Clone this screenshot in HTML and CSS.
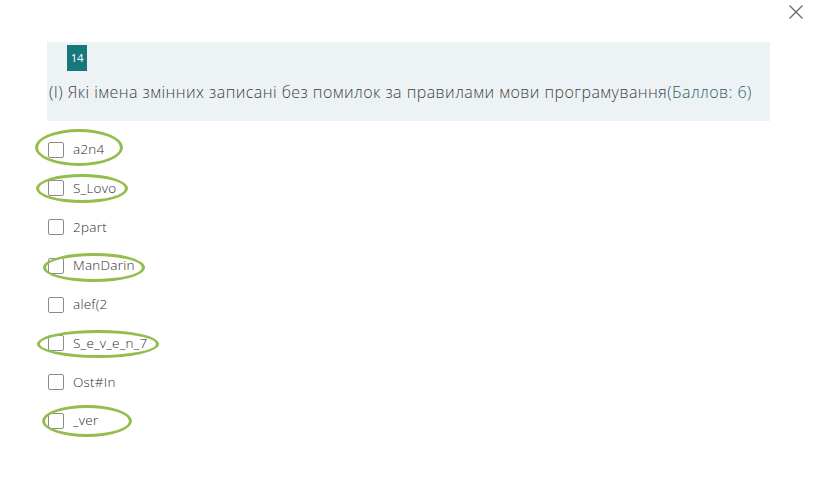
FILE: index.html
```html
<!DOCTYPE html>
<html lang="uk">
<head>
<meta charset="utf-8">
<link rel="stylesheet" href="styles.css">
</head>
<body>
<div class="page">
  <div class="close" aria-label="close">
    <svg width="16" height="16" viewBox="0 0 16 16"><path d="M1.5 1.5 L14.5 14.5 M14.5 1.5 L1.5 14.5" stroke="#6b6b6b" stroke-width="1.4" fill="none"/></svg>
  </div>
  <div class="question">
    <div class="badge">14</div>
    <div class="qtext">(І) Які імена змінних записані без помилок за правилами мови програмування<span class="points">(Баллов: 6)</span></div>
  </div>
  <ul class="options">
    <li class="option"><span class="box"></span><span class="label">a2n4</span></li>
    <li class="option"><span class="box"></span><span class="label">S_Lovo</span></li>
    <li class="option"><span class="box"></span><span class="label">2part</span></li>
    <li class="option"><span class="box"></span><span class="label">ManDarin</span></li>
    <li class="option"><span class="box"></span><span class="label">alef(2</span></li>
    <li class="option"><span class="box"></span><span class="label">S_e_v_e_n_7</span></li>
    <li class="option"><span class="box"></span><span class="label">Ost#In</span></li>
    <li class="option"><span class="box"></span><span class="label">_ver</span></li>
  </ul>
  <span class="oval o1"></span>
  <span class="oval o2"></span>
  <span class="oval o4"></span>
  <span class="oval o6"></span>
  <span class="oval o8"></span>
</div>
</body>
</html>
```
FILE: styles.css
```css
html, body {
  margin: 0;
  padding: 0;
  background: #ffffff;
}
.page {
  position: relative;
  width: 813px;
  height: 495px;
  padding-top: 42px;
  box-sizing: border-box;
  font-family: "Open Sans", "Noto Sans", sans-serif;
  font-weight: 300;
  color: #444;
}
.close {
  position: absolute;
  left: 788px;
  top: 4px;
  width: 16px;
  height: 16px;
}
.close svg { display: block; }
.question {
  margin-left: 47px;
  width: 723px;
  height: 79px;
  box-sizing: border-box;
  background: #edf3f5;
  padding: 3px 0 0 2px;
}
.badge {
  margin-left: 18px;
  width: 20px;
  height: 26px;
  background: #16787d;
  color: #fff;
  font-size: 11.5px;
  font-weight: 400;
  line-height: 26px;
  text-align: center;
  letter-spacing: -0.3px;
}
.qtext {
  margin-top: 10px;
  font-size: 16px;
  letter-spacing: 0.45px;
  line-height: 22px;
  color: #3f3f3f;
  white-space: nowrap;
}
.points {
  color: #2f5a68;
}
.options {
  list-style: none;
  margin: 0;
  padding: 20px 0 0 48px;
  display: flex;
  flex-direction: column;
  gap: 21.75px;
}
.option {
  display: flex;
  align-items: center;
  height: 17px;
  gap: 9px;
}
.box {
  width: 14px;
  height: 14px;
  border: 1px solid #8c8c8c;
  border-radius: 2px;
  background: #fff;
}
.label {
  font-size: 13.5px;
  letter-spacing: 0.25px;
  color: #2e2e2e;
  line-height: 17px;
}
.oval {
  position: absolute;
  border: 3px solid #93bd4c;
  border-radius: 50%;
  box-sizing: border-box;
}
.o1 { left: 35px; top: 129px; width: 88px; height: 37px; }
.o2 { left: 36px; top: 174px; width: 92px; height: 29px; }
.o4 { left: 43px; top: 253px; width: 102px; height: 29px; }
.o6 { left: 37px; top: 330px; width: 122px; height: 28px; }
.o8 { left: 42px; top: 405px; width: 90px; height: 32px; }
```
